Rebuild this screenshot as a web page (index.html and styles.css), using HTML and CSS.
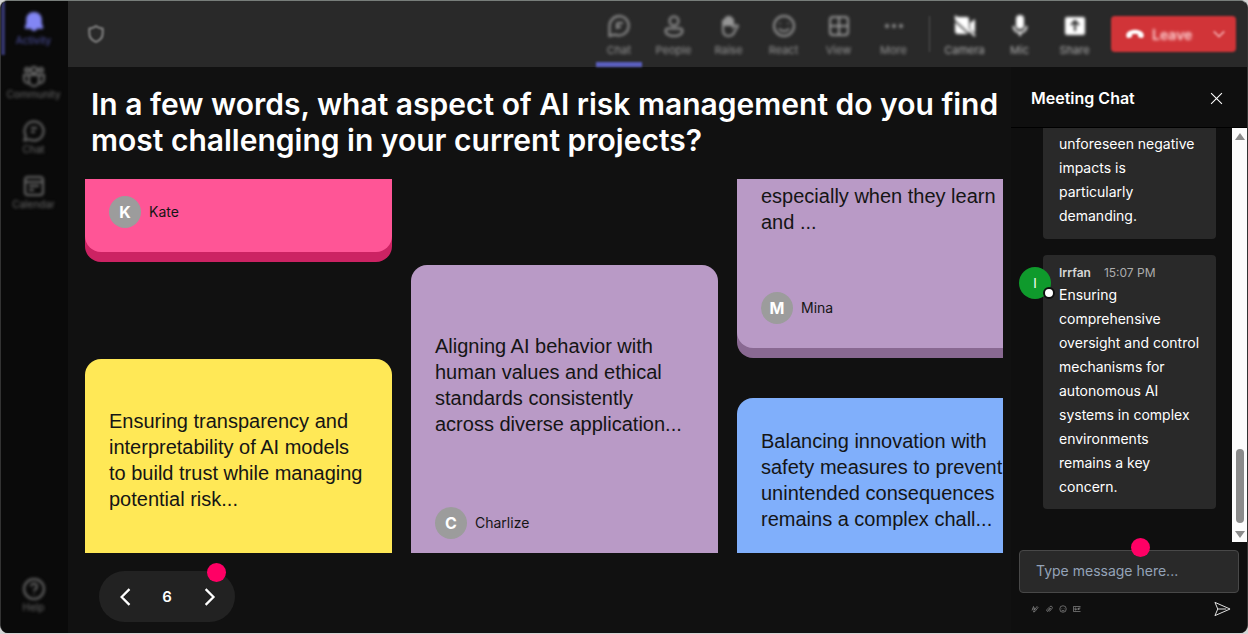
FILE: index.html
```html
<!DOCTYPE html>
<html lang="en">
<head>
<meta charset="utf-8">
<meta name="viewport" content="width=device-width, initial-scale=1">
<title>Meeting</title>
<link rel="stylesheet" href="styles.css">
</head>
<body>
<div class="app">
  <nav class="rail" aria-label="Main">
    <button class="rail-item rail-active">
      <svg class="icon" viewBox="0 0 24 24"><path class="solid" d="M12 2c-4.500 0-7.800 3.400-7.800 7.600v4L2.800 17c-.3.900.2 1.800 1.200 1.800h5a3.100 3.100 0 0 0 6 0h5c1 0 1.500-.9 1.200-1.800l-1.400-3.400v-4C19.800 5.400 16.500 2 12 2z"/></svg>
      <span>Activity</span>
    </button>
    <button class="rail-item">
      <svg class="icon" viewBox="0 0 24 24"><circle cx="12" cy="6" r="3"/><circle cx="5" cy="6" r="2"/><circle cx="19" cy="6" r="2"/><path d="M7 11h10v6a5 5 0 0 1-10 0zM7 11H2v4a4 4 0 0 0 5 4M17 11h5v4a4 4 0 0 1-5 4"/></svg>
      <span>Community</span>
    </button>
    <button class="rail-item">
      <svg class="icon" viewBox="0 0 24 24"><path d="M12 2.500a9.500 9.500 0 1 1-4.600 17.800L2.500 21.500l1.200-4.900A9.500 9.500 0 0 1 12 2.500zM9 9h6M9 13h4"/></svg>
      <span>Chat</span>
    </button>
    <button class="rail-item">
      <svg class="icon" viewBox="0 0 24 24"><rect x="3" y="3" width="18" height="18" rx="3"/><path d="M3 8h18M7 12h10M7 16h5"/></svg>
      <span>Calendar</span>
    </button>
    <button class="rail-item rail-help">
      <svg class="icon" viewBox="0 0 24 24"><circle cx="12" cy="12" r="10"/><path d="M9 9.500a3 3 0 1 1 4.500 2.600c-1 .6-1.500 1-1.500 2.200M12 16.500v1"/></svg>
      <span>Help</span>
    </button>
  </nav>

  <div class="workspace">
    <header class="topbar">
      <svg class="icon shield" viewBox="0 0 24 24"><path d="M12 2.500c2.500 2 5 2.800 8 3v6c0 5-3 8.200-8 10-5-1.800-8-5-8-10v-6c3-.2 5.500-1 8-3z"/></svg>
      <div class="tools">
        <button class="tool tool-active">
          <svg class="icon" viewBox="0 0 24 24"><path d="M12.500 2a9.700 9.700 0 1 1-4.600 18.500L2.500 22V12A10 10 0 0 1 12.500 2zM10 9h6M10 9v6M10 13h4"/></svg>
          <span>Chat</span>
        </button>
        <button class="tool">
          <svg class="icon" viewBox="0 0 24 24"><circle cx="12" cy="7" r="4.500"/><path d="M6 14.500h12a2.500 2.500 0 0 1 2.500 2.500c0 3-3.800 5-8.500 5s-8.500-2-8.500-5A2.500 2.500 0 0 1 6 14.500z"/></svg>
          <span>People</span>
        </button>
        <button class="tool">
          <svg class="icon" viewBox="0 0 24 24"><path class="solid" d="M6 12V6l2-2 2-2h3l3 2v8H6z"/><path d="M6 6v10c0 4 2 6 5.500 6 4 0 5-2 7-6l2.500-4c-1.500-1.500-3-1-5 1V5M9 3v8M13 2v9"/></svg>
          <span>Raise</span>
        </button>
        <button class="tool">
          <svg class="icon" viewBox="0 0 24 24"><circle cx="12" cy="12" r="10"/><path d="M8 9v1M16 9v1M7 14.500c2.500 3.500 7.500 3.500 10 0"/></svg>
          <span>React</span>
        </button>
        <button class="tool">
          <svg class="icon" viewBox="0 0 24 24"><rect x="3" y="3" width="18" height="18" rx="3"/><path d="M12 3v18M3 12h18"/></svg>
          <span>View</span>
        </button>
        <button class="tool">
          <svg class="icon" viewBox="0 0 24 24"><circle class="solid" cx="5" cy="12" r="2"/><circle class="solid" cx="12" cy="12" r="2"/><circle class="solid" cx="19" cy="12" r="2"/></svg>
          <span>More</span>
        </button>
        <span class="divider"></span>
        <button class="tool tool-device">
          <svg class="icon" viewBox="0 0 24 24"><path class="solid" d="M5 3h9a2 2 0 0 1 2 2v14L2 6V3zM2 8l13 12H5a3 3 0 0 1-3-3zM17 9l5-4v14l-5-4z"/><path d="M2 2l20 20"/></svg>
          <span>Camera</span>
        </button>
        <button class="tool tool-device">
          <svg class="icon" viewBox="0 0 24 24"><rect class="solid" x="8" y="1" width="8" height="14" rx="4"/><path d="M5.500 12a6.500 6.500 0 0 0 13 0M12 18.500V22"/></svg>
          <span>Mic</span>
        </button>
        <button class="tool tool-device">
          <svg class="icon" viewBox="0 0 24 24"><rect class="solid" x="2" y="3" width="20" height="18" rx="2"/><path class="cutout" d="M12 17V7M8 11l4-4 4 4"/></svg>
          <span>Share</span>
        </button>
        <button class="leave">
          <svg class="icon" viewBox="0 0 24 24"><path class="solid" d="M12 7C6 7 1.500 10 1.500 13.500c0 2 .8 3.500 2.500 3.200l3-.6c1-.2 1.500-1 1.500-2v-1.600c2-.7 5-.7 7 0v1.600c0 1 .5 1.800 1.500 2l3 .6c1.700.3 2.500-1.200 2.500-3.200C22.500 10 18 7 12 7z"/></svg>
          <span>Leave</span>
          <svg class="icon chevron" viewBox="0 0 16 16"><path d="M2 5l6 6 6-6"/></svg>
        </button>
      </div>
    </header>

    <div class="content">
      <main class="stage">
        <h1 class="question">In a few words, what aspect of AI risk management do you find most challenging in your current projects?</h1>
        <div class="board">
          <div class="column column-first">
            <article class="card card-pink">
              <footer class="author"><span class="initial">K</span>Kate</footer>
            </article>
            <article class="card card-yellow">
              <p>Ensuring transparency and interpretability of AI models to build trust while managing potential risk...</p>
            </article>
          </div>
          <div class="column column-second">
            <article class="card card-mauve card-tall">
              <p>Aligning AI behavior with human values and ethical standards consistently across diverse application...</p>
              <footer class="author"><span class="initial">C</span>Charlize</footer>
            </article>
          </div>
          <div class="column column-third">
            <article class="card card-mauve card-cut">
              <p>especially when they learn and ...</p>
              <footer class="author"><span class="initial">M</span>Mina</footer>
            </article>
            <article class="card card-blue">
              <p>Balancing innovation with safety measures to prevent unintended consequences remains a complex chall...</p>
            </article>
          </div>
        </div>
        <div class="pager">
          <button class="pager-step" aria-label="Previous"><svg viewBox="0 0 16 16"><path d="M12 1L5 8l7 7"/></svg></button>
          <span>6</span>
          <button class="pager-step" aria-label="Next"><svg viewBox="0 0 16 16"><path d="M5 1l7 7-7 7"/></svg></button>
          <i class="marker marker-pager"></i>
        </div>
      </main>

      <aside class="chat">
        <div class="chat-head">
          <h2>Meeting Chat</h2>
          <button class="close" aria-label="Close"><svg viewBox="0 0 12 12"><path d="M1 1l10 10M11 1L1 11"/></svg></button>
        </div>
        <div class="chat-body">
          <div class="messages">
            <div class="bubble bubble-cut"><p>unforeseen negative impacts is particularly demanding.</p></div>
            <div class="bubble">
              <span class="avatar">I<i class="presence"></i></span>
              <div class="meta"><strong>Irrfan</strong><time>15:07 PM</time></div>
              <p>Ensuring comprehensive oversight and control mechanisms for autonomous AI systems in complex environments remains a key concern.</p>
            </div>
          </div>
          <div class="scrollbar">
            <svg viewBox="0 0 10 8"><path d="M5 0l5 7H0z"/></svg>
            <span class="thumb"></span>
            <svg viewBox="0 0 10 8"><path d="M5 8l5-7H0z"/></svg>
          </div>
        </div>
        <div class="composer">
          <input type="text" aria-label="Message" placeholder="Type message here...">
          <i class="marker marker-composer"></i>
          <div class="composer-tools">
            <button aria-label="Format"><svg viewBox="0 0 16 16"><path d="M2 11L5 3l3 7M3 8h4M5 14l3-1 6-8-2-2-6 8z"/></svg></button>
            <button aria-label="Attach"><svg viewBox="0 0 16 16"><path d="M12 6l-5 6c-2 2-5 0-3-3l6-6c3-2 6 1 4 4l-5 6M10 6l-4 5"/></svg></button>
            <button aria-label="Emoji"><svg viewBox="0 0 16 16"><circle cx="8" cy="8" r="6.500"/><path d="M5.500 6v1M10.500 6v1M4.500 9.500c2 3 5 3 7 0"/></svg></button>
            <button aria-label="GIF"><svg viewBox="0 0 16 16"><path d="M15 3H1v10h14M6 6H4v4h2V8M8 6v4M11 10V6h4M11 8h3"/></svg></button>
            <button class="send" aria-label="Send"><svg viewBox="0 0 18 16"><path d="M1 1l16 7L1 15l3-7zM4 8h9"/></svg></button>
          </div>
        </div>
      </aside>
    </div>
  </div>
</div>
</body>
</html>
```
FILE: styles.css
```css
* { box-sizing: border-box; }

body {
  margin: 0;
  background: #d4d4d4;
  color: #fff;
  font-family: Inter, sans-serif;
}

button {
  margin: 0;
  padding: 0;
  border: 0;
  background: none;
  color: inherit;
  font: inherit;
}

h1, h2, p { margin: 0; }

svg {
  display: block;
  fill: none;
  stroke: currentColor;
}

.app {
  display: flex;
  height: calc(100vh - 1px);
  overflow: hidden;
  border: 1px solid #333;
  border-top-color: #777d7a;
  border-bottom: 0;
  border-radius: 8px;
  background: #111;
}

.icon {
  width: 24px;
  height: 24px;
  stroke-width: 2;
}

.solid { fill: currentColor; stroke: none; }

/* left rail */
.rail {
  display: flex;
  flex: none;
  flex-direction: column;
  width: 67px;
  padding-bottom: 10px;
  background: #0a0a0a;
  color: #6b6b6b;
}

.rail-item {
  display: flex;
  flex-direction: column;
  align-items: center;
  height: 55px;
  padding-top: 9px;
  border-left: 4px solid transparent;
  border-right: 6px solid transparent;
  font-size: 10px;
  line-height: 12px;
  filter: blur(1px);
}

.rail-item > *,
.tool > * { filter: blur(1px); }

.rail-active { height: 54px; border-left-color: #34366c; color: #5054a8; }
.rail-active .icon { color: #8286f4; }
.rail-help { margin-top: auto; }

.workspace {
  display: flex;
  flex: 1;
  flex-direction: column;
  min-width: 0;
}

/* meeting toolbar */
.topbar {
  display: flex;
  flex: none;
  align-items: center;
  justify-content: space-between;
  height: 66px;
  padding: 0 11px 0 18px;
  background: #292929;
  color: #969696;
}

.shield { width: 20px; height: 20px; filter: blur(1px); }

.tools {
  display: flex;
  align-items: center;
  height: 100%;
  filter: blur(1px);
}

.tool {
  display: flex;
  flex-direction: column;
  align-items: center;
  gap: 6px;
  width: 55px;
  height: 65px;
  padding-top: 12px;
  font-size: 11px;
  line-height: 12px;
}

.tool-active {
  width: 46px;
  margin: 0 4px 0 5px;
  border-bottom: 5px solid #5b5fc0;
}

.tool-device { color: #adadad; }
.tool-device .icon { color: #fff; }
.cutout { stroke: #292929; }

.divider {
  width: 1px;
  height: 36px;
  margin: 0 7px 0 8px;
  background: #555;
}

.leave {
  display: flex;
  align-items: center;
  gap: 7px;
  width: 125px;
  height: 36px;
  margin-left: 9px;
  padding: 0 10px 0 14px;
  border-radius: 4px;
  background: #d13438;
  color: #ffd5d6;
  font-size: 14px;
  font-weight: 600;
}

.leave .icon { width: 20px; height: 20px; color: #fff; }
.leave span { filter: blur(1px); }
.leave .chevron { width: 14px; height: 14px; margin-left: auto; stroke-width: 2; color: #f3a9ab; }

.content {
  display: flex;
  flex: 1;
  min-height: 0;
}

/* question and answers */
.stage {
  display: flex;
  flex: 1;
  flex-direction: column;
  align-items: flex-start;
  min-width: 0;
  padding: 19px 8px 11px 17px;
}

.question {
  padding-left: 6px;
  font-size: 30px;
  font-weight: 600;
  line-height: 36px;
}

.board {
  display: flex;
  flex: 1;
  gap: 19px;
  width: 100%;
  min-height: 0;
  margin-top: 21px;
  overflow: hidden;
}

.column {
  display: flex;
  flex: none;
  flex-direction: column;
  width: 307px;
}

.card {
  padding: 0 24px;
  border-radius: 16px;
  color: #151515;
  font-family: "Liberation Sans", Arial, sans-serif;
  font-size: 20px;
  line-height: 26px;
}

.card-pink {
  padding: 17px 24px 24px;
  border-radius: 0 0 16px 16px;
  background: #ff5596;
  box-shadow: 0 10px #cc2363;
}

.card-yellow {
  flex: 1;
  margin-top: 107px;
  padding-top: 49px;
  border-radius: 16px 16px 0 0;
  background: #ffe856;
}

.column-second { padding-top: 86px; }

.card-mauve { background: #b99ac6; }

.card-tall {
  flex: 1;
  padding-top: 68px;
  border-radius: 16px 16px 0 0;
}

.card-tall .author { margin-top: 70px; }

.card-cut {
  padding: 4px 24px 24px;
  border-radius: 0 0 16px 16px;
  box-shadow: 0 10px #896992;
}

.card-cut .author { margin-top: 57px; }

.card-blue {
  flex: 1;
  margin-top: 50px;
  padding-top: 30px;
  border-radius: 16px 16px 0 0;
  background: #80affb;
}

.author {
  display: flex;
  align-items: center;
  gap: 8px;
  height: 32px;
  font-family: Inter, sans-serif;
  font-size: 14px;
}

.initial {
  width: 32px;
  border-radius: 50%;
  background: #9c9c9c;
  color: #fff;
  font-size: 16px;
  font-weight: 700;
  line-height: 32px;
  text-align: center;
}

.pager {
  position: relative;
  display: flex;
  align-items: center;
  justify-content: space-between;
  width: 136px;
  height: 51px;
  margin: 18px 0 0 14px;
  padding: 0 17px;
  border-radius: 26px;
  background: #222;
  font-size: 15px;
  font-weight: 600;
}

.pager-step svg { width: 18px; height: 18px; stroke-width: 2; }

.marker {
  position: absolute;
  width: 19px;
  height: 19px;
  border-radius: 50%;
  background: #ff0065;
}

.marker-pager { top: -8px; right: 9px; }

/* chat panel */
.chat {
  display: flex;
  flex: none;
  flex-direction: column;
  width: 236px;
  background: #0f0f0f;
}

.chat-head {
  display: flex;
  flex: none;
  align-items: center;
  justify-content: space-between;
  height: 61px;
  padding: 2px 24px 0 20px;
  border-bottom: 1px solid #000;
}

.chat-head h2 { font-size: 16px; font-weight: 600; }
.close svg { width: 13px; height: 13px; stroke-width: 1; }

.chat-body {
  display: flex;
  flex: 1;
  min-height: 0;
}

.messages {
  display: flex;
  flex: 1;
  flex-direction: column;
  gap: 16px;
  padding: 0 16px 0 32px;
}

.bubble {
  position: relative;
  padding: 8px 16px 10px;
  border-radius: 4px;
  background: #292929;
  font-size: 14px;
  line-height: 24px;
}

.bubble-cut { padding: 4px 16px 11px; border-radius: 0 0 4px 4px; }

.meta {
  display: flex;
  gap: 13px;
  color: #adadad;
  font-size: 12px;
  line-height: 20px;
}

.meta strong { color: #d6d6d6; font-weight: 600; }

.avatar {
  position: absolute;
  top: 12px;
  left: -24px;
  width: 32px;
  border-radius: 50%;
  background: #0f9a2c;
  font-size: 13px;
  line-height: 32px;
  text-align: center;
}

.presence {
  position: absolute;
  right: -4px;
  bottom: 0;
  width: 12px;
  height: 12px;
  border: 2px solid #0f0f0f;
  border-radius: 50%;
  background: #fff;
}

.scrollbar {
  display: flex;
  flex-direction: column;
  align-items: center;
  width: 15px;
  padding: 5px 0 4px;
  background: #fcfcfc;
}

.scrollbar svg { width: 10px; height: 8px; fill: #8b8b8b; stroke: none; }

.thumb {
  width: 8px;
  height: 74px;
  margin: auto 0 7px;
  border-radius: 4px;
  background: #8b8b8b;
}

.composer {
  position: relative;
  padding: 8px 8px 15px;
}

.composer input {
  width: 100%;
  height: 43px;
  padding: 0 16px 2px;
  border: 1px solid #484848;
  border-radius: 4px;
  background: #292929;
  color: #fff;
  font: 14px/20px Inter, sans-serif;
}

.composer input::placeholder { color: #94a3b8; opacity: 1; }

.marker-composer { top: -4px; left: 120px; }

.composer-tools {
  display: flex;
  align-items: center;
  gap: 6px;
  height: 18px;
  margin-top: 7px;
  padding: 0 8px 0 12px;
}

.composer-tools svg { width: 8px; height: 8px; color: #bbb; }
.composer-tools .send { margin-left: auto; }
.send svg { width: 17px; height: 16px; color: #eee; }
```
